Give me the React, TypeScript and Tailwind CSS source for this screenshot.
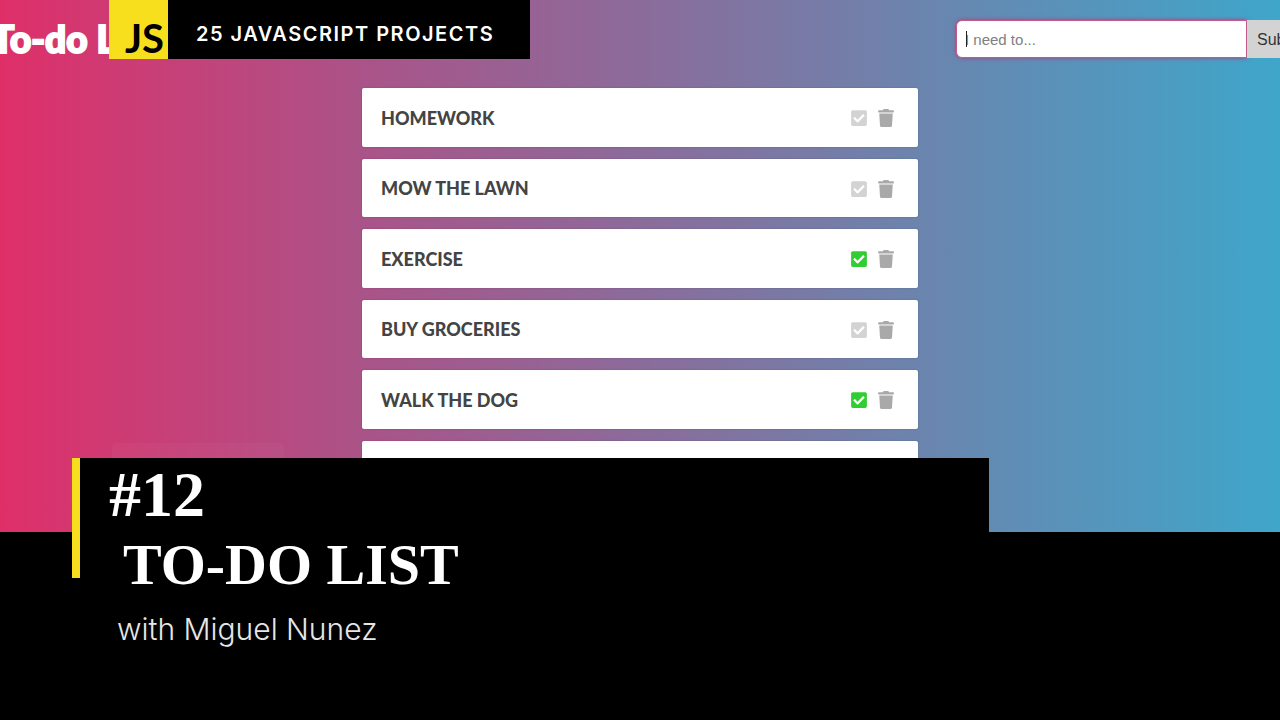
import { useState } from "react";
import { FaCheckSquare, FaTrash } from "react-icons/fa";

type Task = { id: number; name: string; done: boolean };

const initialTasks: Task[] = [
  { id: 1, name: "Homework", done: false },
  { id: 2, name: "Mow the lawn", done: false },
  { id: 3, name: "Exercise", done: true },
  { id: 4, name: "Buy groceries", done: false },
  { id: 5, name: "Walk the dog", done: true },
];

function TaskRow({ task, onToggle, onRemove }: { task: Task; onToggle: () => void; onRemove: () => void }) {
  return (
    <li className="flex items-center gap-[9px] rounded-xs bg-white pr-[23px] pl-[19px] pt-0.5 shadow-[0_0_2px_rgba(0,0,0,0.2)]">
      <span className="grow font-['Lato',sans-serif] text-[18px] font-black text-[#444] uppercase">{task.name}</span>
      <label className={task.done ? "cursor-pointer text-[#32cd32]" : "cursor-pointer text-[#d3d3d3]"}>
        <input type="checkbox" className="sr-only" aria-label={task.name} checked={task.done} onChange={onToggle} />
        <FaCheckSquare size={18} />
      </label>
      <button type="button" aria-label="Delete" className="cursor-pointer text-[#a9a9a9]" onClick={onRemove}>
        <FaTrash size={18} />
      </button>
    </li>
  );
}

function TodoApp() {
  const [tasks, setTasks] = useState(initialTasks);
  const [text, setText] = useState("");

  return (
    <section className="relative h-[532px] overflow-hidden bg-[linear-gradient(to_right,#df2f69,#a95489_29%,#7180aa_68%,#3fa6ca)]">
      <header className="-mx-10 flex items-center justify-between pt-5 pl-8">
        <h1 className="font-['Lato',sans-serif] text-[37px] leading-[38px] font-black text-white [stroke-linejoin:round] [-webkit-text-stroke:2px_white]">
          To-do List
        </h1>
        <form
          className="flex h-[38px] font-['Liberation_Sans',Arial,sans-serif] text-[15px]"
          onSubmit={(e) => {
            e.preventDefault();
            if (!text.trim()) return;
            setTasks([...tasks, { id: Date.now(), name: text, done: false }]);
            setText("");
          }}
        >
          <div className="relative flex">
            <input
              type="text"
              aria-label="New task"
              placeholder="I need to..."
              value={text}
              onChange={(e) => setText(e.target.value)}
              className="w-[291px] rounded-l-md border border-[#c05a8c] bg-white px-2 pt-0.5 text-[#444] shadow-[0_0_4px_#b03a78] outline-none placeholder:text-[#808080]"
            />
            <span className="absolute top-[11px] left-[10px] h-4 w-px bg-[#222]" />
          </div>
          <button type="submit" className="relative w-[73px] bg-[#d3d3d3] pl-[10px] pt-0.5 text-left text-base text-[#333]">
            Submit
          </button>
        </form>
      </header>
      <ul className="mx-auto mt-[30px] grid h-[411px] w-[556px] max-w-full grid-rows-6 gap-3">
        {tasks.map((task) => (
          <TaskRow
            key={task.id}
            task={task}
            onToggle={() => setTasks(tasks.map((t) => (t.id === task.id ? { ...t, done: !t.done } : t)))}
            onRemove={() => setTasks(tasks.filter((t) => t.id !== task.id))}
          />
        ))}
        <li className="rounded-xs bg-white shadow-[0_0_2px_rgba(0,0,0,0.2)]" />
      </ul>
      <div className="absolute top-[443px] left-[112px] h-10 w-[172px] rounded-sm bg-white/3" />
    </section>
  );
}

export default function App() {
  return (
    <main className="relative min-h-screen overflow-hidden bg-black">
      <TodoApp />
      <div className="absolute top-0 left-[109px] flex h-[59px] bg-black">
        <div className="flex w-[59px] items-end justify-end bg-[#f7df1e] pr-1 font-['Lato',sans-serif] text-[40px] leading-[42px] font-bold text-black">
          JS
        </div>
        <p className="pt-5 pr-9 pl-7 font-['Inter',sans-serif] text-xl leading-7 font-semibold tracking-[1.5px] text-white">
          25 JAVASCRIPT PROJECTS
        </p>
      </div>
      <div className="relative -mt-[74px] ml-[72px] flex max-w-[917px] items-start bg-black">
        <div className="h-[120px] w-2 shrink-0 bg-[#f7df1e]" />
        <div className="pl-[29px] text-white">
          <h2 className="font-bold">
            <span className="block pt-0.5 font-['Liberation_Serif',serif] text-[64px] leading-[70px]">#12</span>
            <span className="block pl-[14px] font-['Liberation_Serif',serif] text-[58px] leading-[70px]">TO-DO LIST</span>
          </h2>
          <p className="pt-2 pl-2 font-['Inter',sans-serif] text-[30px] leading-[42px] font-light text-[#e6e6e6]">
            with Miguel Nunez
          </p>
        </div>
      </div>
    </main>
  );
}
